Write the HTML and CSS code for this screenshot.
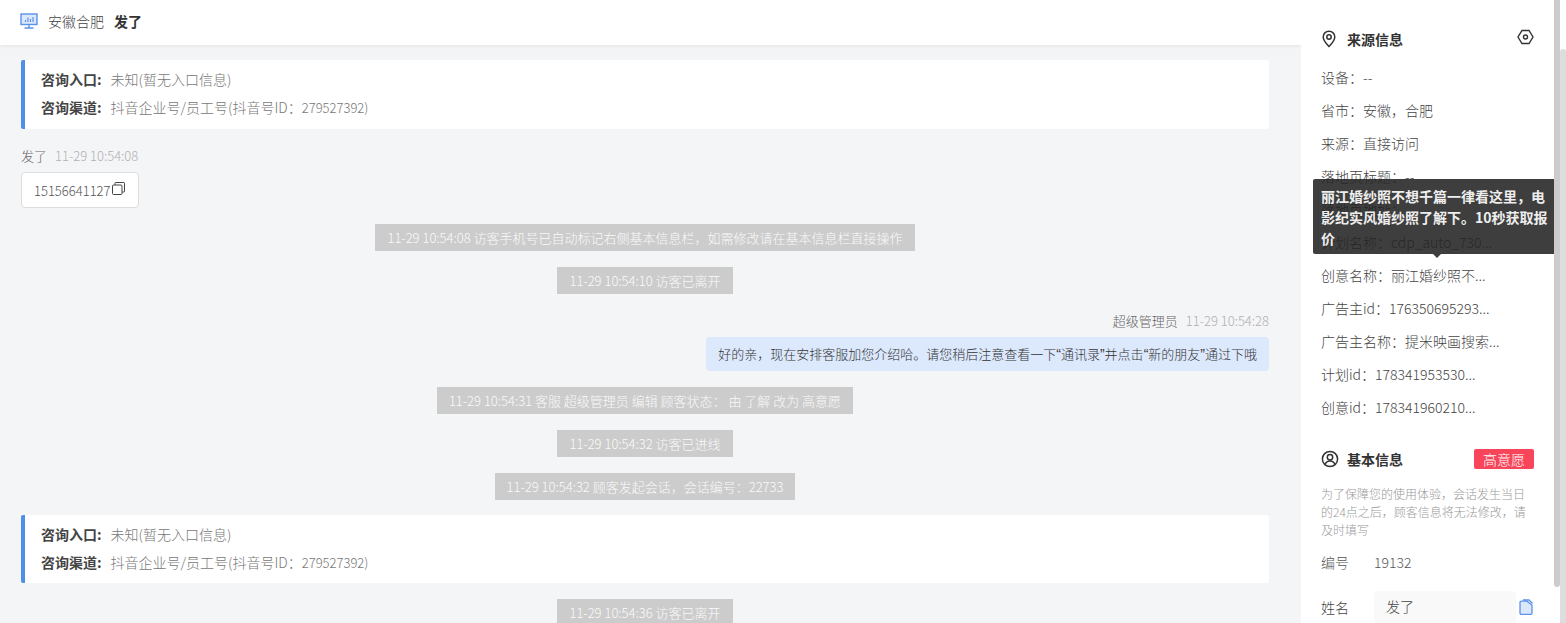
FILE: index.html
```html
<!DOCTYPE html>
<html lang="en">
<head>
    <meta charset="UTF-8">
    <meta name="viewport" content="width=device-width, initial-scale=1.0">
    <title>会话详情</title>
    <link rel="stylesheet" href="styles.css">
</head>
<body>
    <div class="page">
        <div class="chat">
            <div class="topbar">
                <svg class="screen-icon" width="18" height="16" viewBox="0 0 18 16" fill="none" stroke="#5b93ea" stroke-width="1.4">
                    <rect x="1" y="1" width="16" height="10.5" fill="#dbe8fb"/>
                    <path d="M9 11.5V15M4.5 15h9"/>
                    <path d="M5.5 9V7M8 9V4.5M10.500 9V6M13 9V4" stroke-width="1.2"/>
                </svg>
                <span class="place">安徽合肥</span>
                <b class="visitor">发了</b>
            </div>

            <div class="messages">
                <div class="entry-card">
                    <p><b>咨询入口:</b>未知(暂无入口信息)</p>
                    <p><b>咨询渠道:</b>抖音企业号/员工号(抖音号ID：<span class="num">279527392)</span></p>
                </div>

                <div class="msg-head first-head">发了<span class="time">11-29 10:54:08</span></div>
                <div class="phone-box">
                    <span>15156641127</span>
                    <svg width="13" height="13" viewBox="0 0 13 13" fill="none" stroke="#444" stroke-width="1">
                        <rect x="0.5" y="3" width="9.5" height="9.5" rx="1"/>
                        <path d="M3 3V1.2C3 .8 3.3.5 3.7.5h8.100c.4 0 .7.3.7.7v8.100c0 .4-.3.7-.7.7H10"/>
                    </svg>
                </div>

                <div class="notice-row"><span class="notice">11-29 10:54:08 访客手机号已自动标记右侧基本信息栏，如需修改请在基本信息栏直接操作</span></div>
                <div class="notice-row"><span class="notice">11-29 10:54:10 访客已离开</span></div>

                <div class="msg-head own-head">超级管理员<span class="time">11-29 10:54:28</span></div>
                <div class="own-row">
                    <div class="bubble">好的亲，现在安排客服加您介绍哈。请您稍后注意查看一下<span class="quote">“</span>通讯录<span class="quote">”</span>并点击<span class="quote">“</span>新的朋友<span class="quote">”</span>通过下哦</div>
                </div>

                <div class="notice-row"><span class="notice">11-29 10:54:31 客服 超级管理员 编辑 顾客状态： 由 了解 改为 高意愿</span></div>
                <div class="notice-row"><span class="notice">11-29 10:54:32 访客已进线</span></div>
                <div class="notice-row"><span class="notice">11-29 10:54:32 顾客发起会话，会话编号：22733</span></div>

                <div class="entry-card second-card">
                    <p><b>咨询入口:</b>未知(暂无入口信息)</p>
                    <p><b>咨询渠道:</b>抖音企业号/员工号(抖音号ID：<span class="num">279527392)</span></p>
                </div>

                <div class="notice-row"><span class="notice">11-29 10:54:36 访客已离开</span></div>
            </div>
        </div>

        <div class="side">
            <div class="side-title source-title">
                <svg width="16" height="18" viewBox="0 0 16 18" fill="none" stroke="#333" stroke-width="1.5">
                    <path d="M8 1.2c3.3 0 5.800 2.500 5.800 5.700 0 3.500-3.200 6.900-5.800 9.600-2.600-2.700-5.800-6.100-5.800-9.600C2.200 3.700 4.700 1.200 8 1.200z"/>
                    <circle cx="8" cy="7" r="2.2"/>
                </svg>
                <b>来源信息</b>
                <svg class="hex" width="17" height="16" viewBox="0 0 17 16" fill="none" stroke="#333" stroke-width="1.4">
                    <path d="M5 1.500h7l4 6.500-4 6.500H5L1 8z"/>
                    <circle cx="8.500" cy="8" r="2"/>
                </svg>
            </div>

            <div class="info-row">设备：--</div>
            <div class="info-row">省市：安徽，合肥</div>
            <div class="info-row">来源：直接访问</div>
            <div class="info-row">落地页标题：--</div>
            <div class="info-row">落地页地址：--</div>
            <div class="info-row">计划名称：cdp_auto_730...</div>
            <div class="info-row tip-anchor">创意名称：丽江婚纱照不...
                <div class="tooltip">丽江婚纱照不想千篇一律看这里，电影纪实风婚纱照了解下。10秒获取报价</div>
            </div>
            <div class="info-row">广告主id：176350695293...</div>
            <div class="info-row">广告主名称：提米映画搜索...</div>
            <div class="info-row">计划id：178341953530...</div>
            <div class="info-row">创意id：178341960210...</div>

            <div class="side-title base-title">
                <svg width="18" height="18" viewBox="0 0 18 18" fill="none" stroke="#333" stroke-width="1.5">
                    <circle cx="9" cy="9" r="7.6"/>
                    <circle cx="9" cy="7.2" r="2.7"/>
                    <path d="M3.900 14.400c1-2.200 2.900-3.400 5.100-3.400s4.100 1.200 5.100 3.400"/>
                </svg>
                <b>基本信息</b>
                <span class="level">高意愿</span>
            </div>
            <p class="hint">为了保障您的使用体验，会话发生当日的24点之后，顾客信息将无法修改，请及时填写</p>

            <div class="field code-field"><label>编号</label><span>19132</span></div>
            <div class="field name-field">
                <label>姓名</label>
                <div class="name-input">发了</div>
                <svg width="14" height="16" viewBox="0 0 14 16" fill="#dbe8fb" stroke="#5b93ea" stroke-width="1.3">
                    <path d="M1 3.500c0-.8.5-1.300 1.300-1.300H8L13 6v8c0 .8-.5 1.300-1.300 1.300H2.300C1.500 15.300 1 14.800 1 14z"/>
                    <path d="M4 1h6l3.500 3.500" fill="none"/>
                </svg>
            </div>
        </div>

        <div class="side-scroll"><div class="side-thumb"></div></div>
        <div class="page-scroll"><div class="page-thumb"></div></div>
    </div>
</body>
</html>
```

FILE: styles.css
```css
* {
    box-sizing: border-box;
}
html, body {
    margin: 0;
    height: 100%;
    overflow: hidden;
}
body {
    font-family: "Noto Sans CJK SC", "Liberation Sans", sans-serif;
    font-size: 14px;
    font-weight: 300;
    color: #333;
    background: #f4f5f7;
}
b {
    font-weight: 700;
}
p {
    margin: 0;
}
.num {
    font-size: 13px;
}
.page {
    display: flex;
    height: 623px;
    overflow: hidden;
}
.chat {
    width: 1301px;
    flex-shrink: 0;
    overflow: hidden;
}
.topbar {
    height: 45px;
    padding: 0 0 4px 20px;
    display: flex;
    align-items: center;
    background: white;
    box-shadow: 0 1px 4px rgba(0, 0, 0, 0.08);
}
.screen-icon {
    margin-right: 10px;
}
.place {
    color: #444;
    margin-right: 10px;
}
.visitor {
    color: #333;
}
.messages {
    padding: 15px 32px 0 21px;
}
.entry-card {
    height: 69px;
    padding: 5px 0 0 16px;
    background: white;
    border-left: 4px solid #4f8fe8;
    border-radius: 2px;
    color: #777;
}
.entry-card p {
    height: 28px;
    line-height: 28px;
}
.entry-card b {
    margin-right: 9px;
    color: #444;
}
.second-card {
    height: 68px;
    margin-top: 15px;
}
.msg-head {
    font-size: 13px;
    line-height: 20px;
    color: #666;
}
.time {
    margin-left: 8px;
    color: #b0b0b0;
}
.first-head {
    margin-top: 17px;
}
.phone-box {
    display: inline-flex;
    align-items: center;
    height: 36px;
    margin-top: 6px;
    padding: 0 13px 0 12px;
    background: white;
    border: 1px solid #ddd;
    border-radius: 4px;
    font-size: 13px;
    color: #555;
}
.phone-box svg {
    margin: -3px 0 0 1px;
}
.notice-row {
    display: flex;
    justify-content: center;
    margin-top: 16px;
}
.notice {
    height: 27px;
    line-height: 27px;
    padding: 0 12px;
    background: #ccc;
    font-size: 13px;
    color: #fafafa;
}
.own-head {
    margin-top: 17px;
    text-align: right;
}
.own-row {
    display: flex;
    justify-content: flex-end;
    margin-top: 6px;
}
.bubble {
    height: 34px;
    line-height: 34px;
    padding: 0 12px;
    background: #dce8fc;
    border-radius: 4px;
    font-size: 13px;
    color: #333;
}
.quote {
    font-family: "Liberation Sans", sans-serif;
    font-size: 14px;
}
.side {
    width: 253px;
    flex-shrink: 0;
    padding: 0 20px;
    background: white;
    overflow: hidden;
    color: #444;
}
.side-title {
    display: flex;
    align-items: center;
    color: #333;
}
.side-title svg {
    margin-right: 8px;
}
.source-title {
    height: 22px;
    margin-top: 28px;
}
.source-title svg:first-child {
    margin-right: 10px;
}
.hex {
    margin: -4px 0 0 auto !important;
}
.info-row {
    height: 33px;
    line-height: 33px;
    white-space: nowrap;
}
.source-title + .info-row {
    margin-top: 11px;
}
.tip-anchor {
    position: relative;
}
.tooltip {
    position: absolute;
    left: -8px;
    bottom: 38px;
    width: 250px;
    height: 75px;
    padding: 7px 14px 0 8px;
    background: rgba(35, 35, 35, 0.88);
    border-radius: 2px;
    color: #eee;
    font-weight: 700;
    line-height: 21px;
    white-space: normal;
}
.tooltip::after {
    content: "";
    position: absolute;
    left: 120px;
    bottom: -4px;
    border-left: 4px solid transparent;
    border-right: 4px solid transparent;
    border-top: 4px solid rgba(35, 35, 35, 0.88);
}
.base-title {
    margin-top: 24px;
    height: 22px;
}
.level {
    margin-left: auto;
    width: 60px;
    height: 20px;
    line-height: 20px;
    text-align: center;
    background: #f8455a;
    border-radius: 2px;
    color: white;
}
.hint {
    margin-top: 15px;
    font-size: 12px;
    line-height: 18px;
    color: #999;
}
.field {
    display: flex;
    align-items: center;
}
.field label {
    width: 53px;
    flex-shrink: 0;
}
.code-field {
    margin-top: 13px;
    color: #555;
}
.name-field {
    margin-top: 19px;
}
.name-input {
    width: 142px;
    height: 32px;
    line-height: 30px;
    padding-left: 12px;
    margin-right: 3px;
    background: #f9f9f9;
    border-radius: 4px;
}
.side-scroll {
    width: 6px;
    background: white;
}
.side-thumb {
    height: 587px;
    background: #ccc;
    border-radius: 0 0 3px 3px;
}
.page-scroll {
    flex: 1;
    padding-top: 49px;
    background: white;
}
.page-thumb {
    height: 574px;
    background: #ddd;
    border-radius: 3px 3px 0 0;
}
```
